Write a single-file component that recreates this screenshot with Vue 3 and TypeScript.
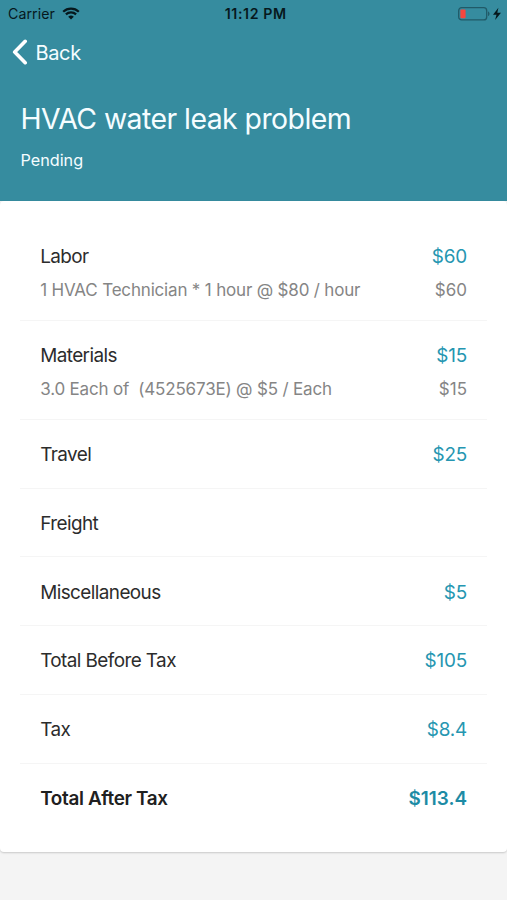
<script setup lang="ts">
interface Detail {
  text: string
  amount: string
}

interface CostRow {
  key: string
  label: string
  amount?: string
  detail?: Detail
  strong?: boolean
}

const rows: CostRow[] = [
  {
    key: 'labor',
    label: 'Labor',
    amount: '$60',
    detail: { text: '1 HVAC Technician * 1 hour @ $80 / hour', amount: '$60' },
  },
  {
    key: 'materials',
    label: 'Materials',
    amount: '$15',
    detail: { text: '3.0 Each of  (4525673E) @ $5 / Each', amount: '$15' },
  },
  { key: 'travel', label: 'Travel', amount: '$25' },
  { key: 'freight', label: 'Freight' },
  { key: 'misc', label: 'Miscellaneous', amount: '$5' },
  { key: 'before', label: 'Total Before Tax', amount: '$105' },
  { key: 'tax', label: 'Tax', amount: '$8.4' },
  { key: 'after', label: 'Total After Tax', amount: '$113.4', strong: true },
]
</script>

<template>
  <div class="screen">
    <header class="header">
      <div class="status-bar">
        <div class="status-left">
          <span class="carrier">Carrier</span>
          <svg class="wifi" viewBox="0 0 18 13" aria-hidden="true">
            <path d="M1.2 4.7a11.2 11.2 0 0 1 15.6 0" />
            <path d="M3.9 7.4a7.3 7.3 0 0 1 10.2 0" />
            <path class="wifi-dot" d="M9 12.6 6.2 9.8a4 4 0 0 1 5.6 0z" />
          </svg>
        </div>
        <span class="clock">11:12 PM</span>
        <div class="status-right">
          <svg class="battery" viewBox="0 0 44 16" aria-hidden="true">
            <rect class="battery-case" x="0.7" y="1.7" width="28" height="12.2" rx="3" />
            <rect class="battery-level" x="2.400" y="3.4" width="5.2" height="8.8" rx="1" />
            <path class="battery-cap" d="M30 5.5c2 .7 2 3.900 0 4.600z" />
            <path class="bolt" d="M40.400 1.700 35 8.700h3.500L37.100 14.100 43 6.700h-3.700z" />
          </svg>
        </div>
      </div>
      <button class="back" type="button">
        <svg class="chevron" viewBox="0 0 16 26" aria-hidden="true">
          <path d="M13.200 2.300 2.700 13 13.200 23.700" />
        </svg>
        <span>Back</span>
      </button>
      <h1 class="title">HVAC water leak problem</h1>
      <p class="state">Pending</p>
    </header>

    <main class="card">
      <section v-for="row in rows" :key="row.key" class="row" :class="{ strong: row.strong }">
        <div class="line">
          <span class="label">{{ row.label }}</span>
          <span v-if="row.amount" class="amount">{{ row.amount }}</span>
        </div>
        <div v-if="row.detail" class="line detail">
          <span class="detail-text">{{ row.detail.text }}</span>
          <span>{{ row.detail.amount }}</span>
        </div>
      </section>
    </main>
  </div>
</template>

<style>
body {
  margin: 0;
  background: #f4f4f4;
}
</style>

<style scoped>
.screen {
  box-sizing: border-box;
  min-height: 900px;
  background: #f4f4f4;
  font-family: Inter, 'Liberation Sans', sans-serif;
  color: #2c2c2c;
}

.header {
  box-sizing: border-box;
  height: 201px;
  background: #368c9f;
  color: #f5fdff;
}

.status-bar {
  display: grid;
  grid-template-columns: 1fr auto 1fr;
  align-items: center;
  height: 27px;
  padding: 0 5px 0 8px;
  color: #06181d;
}

.status-left {
  display: flex;
  align-items: center;
  gap: 7px;
}

.carrier {
  font-size: 14.2px;
  line-height: 27px;
  letter-spacing: 0.05px;
}

.wifi {
  width: 18px;
  height: 13px;
}

.wifi path {
  fill: none;
  stroke: currentColor;
  stroke-width: 2.2;
}

.wifi .wifi-dot {
  fill: currentColor;
  stroke: none;
}

.clock {
  padding-left: 1.5px;
  font-size: 14.2px;
  font-weight: 600;
  line-height: 27px;
  letter-spacing: 0.6px;
}

.status-right {
  display: flex;
  justify-content: flex-end;
}

.battery {
  width: 44px;
  height: 16px;
}

.battery-case {
  fill: none;
  stroke: #205a68;
  stroke-width: 1.3;
}

.battery-level {
  fill: #f5463e;
}

.battery-cap {
  fill: #205a68;
}

.bolt {
  fill: #06181d;
}

.back {
  display: flex;
  align-items: center;
  gap: 7.400px;
  height: 50px;
  margin: 0;
  padding: 0 12px;
  border: 0;
  background: none;
  color: inherit;
  font: 400 20px/50px Inter, 'Liberation Sans', sans-serif;
  letter-spacing: -0.3px;
}

.back span {
  padding-top: 1px;
}

.chevron {
  width: 16px;
  height: 26px;
}

.chevron path {
  fill: none;
  stroke: #fff;
  stroke-width: 3.6;
  stroke-linecap: round;
  stroke-linejoin: round;
}

.title {
  margin: 23px 0 0 20.500px;
  padding-top: 1px;
  font-size: 28.4px;
  font-weight: 400;
  line-height: 36px;
  letter-spacing: -0.54px;
  white-space: nowrap;
}

.state {
  margin: 13px 0 0 20.500px;
  font-size: 16.2px;
  line-height: 20px;
}

.card {
  box-sizing: border-box;
  height: 651px;
  padding: 20.500px 20px 20px;
  border-radius: 4px;
  background: #fff;
  box-shadow: 0 1px 2px rgba(0, 0, 0, 0.18);
}

.row {
  box-sizing: border-box;
  padding: 21.200px 20px 0 20.200px;
  height: 68.75px;
  border-bottom: 1.4px solid #f5f5f5;
}

.row:has(.detail) {
  height: 99.200px;
}

.row:last-child {
  border-bottom: 0;
}

.line {
  display: flex;
  justify-content: space-between;
  height: 28px;
  font-size: 18.9px;
  line-height: 28px;
}

.label {
  letter-spacing: -0.57px;
}

.amount {
  color: #2596b1;
  letter-spacing: -0.2px;
}

.detail {
  height: 24px;
  margin-top: 7.500px;
  color: #858585;
  font-size: 17px;
  line-height: 24px;
}

.detail-text {
  letter-spacing: -0.18px;
  white-space: pre;
}

.strong .label {
  font-weight: 600;
  letter-spacing: -0.34px;
  color: #202020;
}

.strong .amount {
  font-weight: 600;
  letter-spacing: 0;
  color: #1d8ba5;
}
</style>
